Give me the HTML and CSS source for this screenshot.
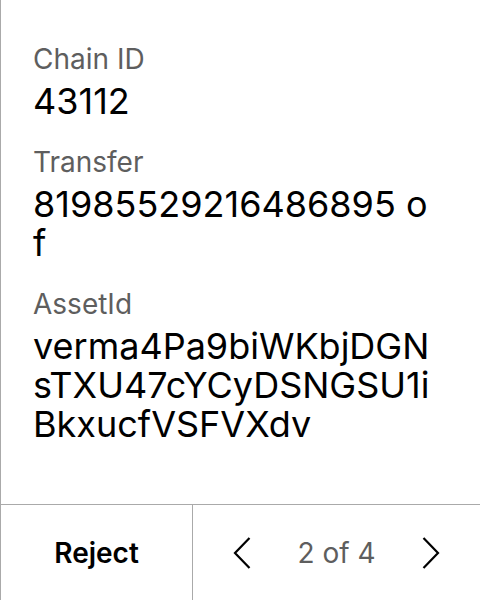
FILE: index.html
```html
<!DOCTYPE html>
<html>
<head>
<meta charset="utf-8">
<link rel="stylesheet" href="styles.css">
</head>
<body>
<div class="screen">
  <div class="details">
    <div class="field">
      <div class="label">Chain ID</div>
      <div class="value">43112</div>
    </div>
    <div class="field">
      <div class="label">Transfer</div>
      <div class="value">81985529216486895 of</div>
    </div>
    <div class="field">
      <div class="label">AssetId</div>
      <div class="value">verma4Pa9biWKbjDGNsTXU47cYCyDSNGSU1iBkxucfVSFVXdv</div>
    </div>
  </div>
  <div class="footer">
    <button class="reject">Reject</button>
    <div class="pager">
      <svg class="chev" width="18" height="32" viewBox="0 0 18 32"><path d="M16.5 1 L2 16 L16.5 31" fill="none" stroke="#000" stroke-width="2.2"/></svg>
      <span class="count">2 of 4</span>
      <svg class="chev" width="18" height="32" viewBox="0 0 18 32"><path d="M1.5 1 L16 16 L1.5 31" fill="none" stroke="#000" stroke-width="2.2"/></svg>
    </div>
  </div>
</div>
</body>
</html>
```
FILE: styles.css
```css
html, body {
  margin: 0;
  padding: 0;
  background: #fff;
}
body {
  font-family: Inter, "Noto Sans", sans-serif;
  color: #000;
}
.screen {
  width: 480px;
  height: 600px;
  box-sizing: border-box;
  border-left: 1px solid #aaa;
  display: flex;
  flex-direction: column;
}
.details {
  flex: 1;
  padding: 42px 46px 0 32px;
  display: flex;
  flex-direction: column;
  gap: 24px;
}
.label {
  font-size: 28px;
  line-height: 34px;
  color: #5e5e5e;
}
.value {
  font-size: 36px;
  line-height: 39px;
  margin-top: 6px;
  word-break: break-all;
}
.footer {
  height: 96px;
  box-sizing: border-box;
  border-top: 1px solid #aaa;
  display: flex;
}
.reject {
  width: 192px;
  border: none;
  border-right: 1px solid #aaa;
  background: none;
  font-family: inherit;
  font-size: 28px;
  font-weight: 600;
  color: #000;
  padding: 0;
}
.pager {
  flex: 1;
  display: flex;
  align-items: center;
  justify-content: center;
  gap: 46px;
}
.count {
  font-size: 28px;
  color: #5e5e5e;
}
.chev {
  display: block;
}
```
